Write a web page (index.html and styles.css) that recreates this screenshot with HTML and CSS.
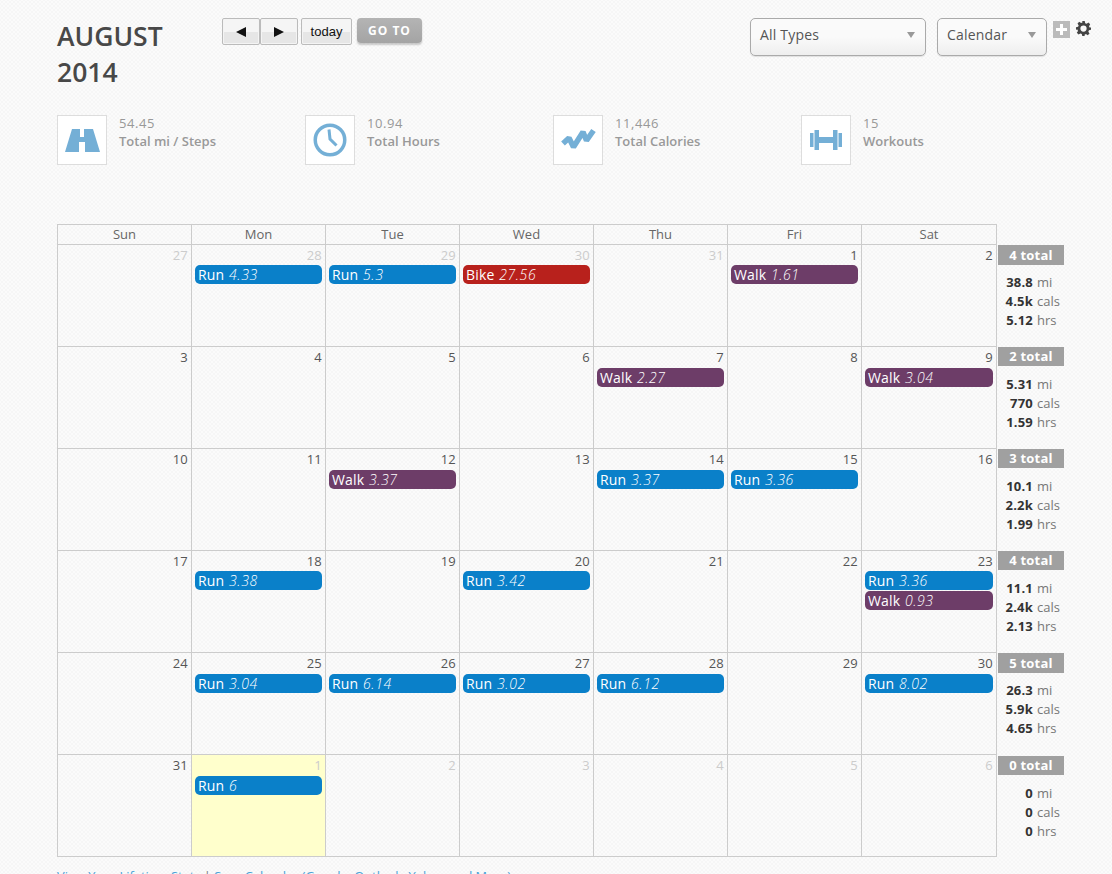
FILE: index.html
```html
<!DOCTYPE html>
<html lang="en">
<head>
<meta charset="utf-8">
<title>August 2014</title>
<link rel="stylesheet" href="styles.css">
</head>
<body>
<div class="page">
  <header class="top">
    <h1 class="title">AUGUST<br>2014</h1>
    <div class="nav">
      <div class="btn-group">
        <button class="btn btn-arrow" aria-label="Previous"><svg width="10" height="10" viewBox="0 0 10 10"><path d="M0 5L10 0v10z" fill="#111"/></svg></button>
        <button class="btn btn-arrow" aria-label="Next"><svg width="10" height="10" viewBox="0 0 10 10"><path d="M10 5L0 0v10z" fill="#111"/></svg></button>
      </div>
      <button class="btn btn-today">today</button>
      <button class="goto">GO TO</button>
    </div>
    <div class="controls">
      <div class="select select-types"><span>All Types</span><i class="caret"></i></div>
      <div class="select select-view"><span>Calendar</span><i class="caret"></i></div>
      <div class="plus"><svg width="17" height="17" viewBox="0 0 17 17"><path d="M7 3h3v4h4v3h-4v4H7v-4H3V7h4z" fill="#fff"/></svg></div>
      <svg class="gear" width="15" height="15" viewBox="0 0 24 24"><path fill="#444" fill-rule="evenodd" d="M10 0h4l.7 3.400 2.300 1 2.900-1.900 2.800 2.800L20.800 8.200l.9 2.200L24 10.200v3.900l-3.300.7-1 2.300 1.900 2.900-2.800 2.800-2.900-1.900-2.200.9L13.900 24H10l-.7-3.300-2.300-.9-2.900 1.900-2.800-2.800 1.900-2.900-.9-2.300L0 14v-4l3.300-.7 1-2.300-1.900-2.900 2.800-2.800L8.100 3.200l2.200-.9zM12 7a5 5 0 1 0 0 10 5 5 0 0 0 0-10z"/></svg>
    </div>
  </header>

  <section class="stats">
    <div class="stat">
      <div class="stat-icon"><svg width="35" height="23" viewBox="0 0 35 23"><path fill="#74afd6" d="M7 0h8v8h4V0h9l7 23H20V13h-6v10H0z"/></svg></div>
      <div class="stat-text"><div class="stat-num">54.45</div><div class="stat-label">Total mi / Steps</div></div>
    </div>
    <div class="stat">
      <div class="stat-icon"><svg width="34" height="34" viewBox="0 0 34 34"><circle cx="17" cy="17" r="14.750" fill="none" stroke="#74afd6" stroke-width="3.500"/><path d="M16 6.500l1 9.500 6.500 6.500" fill="none" stroke="#74afd6" stroke-width="3"/></svg></div>
      <div class="stat-text"><div class="stat-num">10.94</div><div class="stat-label">Total Hours</div></div>
    </div>
    <div class="stat">
      <div class="stat-icon"><svg width="38" height="30" viewBox="0 0 38 30"><path d="M4 18.500l6-5.500 4.500 9 9.500-15 3.500 8.500 7-10" fill="none" stroke="#74afd6" stroke-width="5.500" stroke-linejoin="bevel"/></svg></div>
      <div class="stat-text"><div class="stat-num">11,446</div><div class="stat-label">Total Calories</div></div>
    </div>
    <div class="stat">
      <div class="stat-icon"><svg width="34" height="20" viewBox="0 0 34 20"><path fill="#74afd6" d="M1 3h3.500v14H1zM5.500 0H10v20H5.500zM10 7h14v6H10zM24 0h4.500v20H24zM29.500 3H33v14h-3.500z"/></svg></div>
      <div class="stat-text"><div class="stat-num">15</div><div class="stat-label">Workouts</div></div>
    </div>
  </section>

  <section class="cal">
    <div class="cal-head">
      <div class="dow">Sun</div><div class="dow">Mon</div><div class="dow">Tue</div><div class="dow">Wed</div><div class="dow">Thu</div><div class="dow">Fri</div><div class="dow">Sat</div>
    </div>

    <div class="week week-tight badge-low">
      <div class="day other"><div class="num">27</div></div>
      <div class="day other"><div class="num">28</div><div class="ev run">Run <em>4.33</em></div></div>
      <div class="day other"><div class="num">29</div><div class="ev run">Run <em>5.3</em></div></div>
      <div class="day other"><div class="num">30</div><div class="ev bike">Bike <em>27.56</em></div></div>
      <div class="day other"><div class="num">31</div></div>
      <div class="day"><div class="num">1</div><div class="ev walk">Walk <em>1.61</em></div></div>
      <div class="day"><div class="num">2</div></div>
      <aside class="sum"><div class="sum-badge">4 total</div><div class="sum-rows">
        <b>38.8</b><span>mi</span><b>4.5k</b><span>cals</span><b>5.12</b><span>hrs</span></div></aside>
    </div>

    <div class="week">
      <div class="day"><div class="num">3</div></div>
      <div class="day"><div class="num">4</div></div>
      <div class="day"><div class="num">5</div></div>
      <div class="day"><div class="num">6</div></div>
      <div class="day"><div class="num">7</div><div class="ev walk">Walk <em>2.27</em></div></div>
      <div class="day"><div class="num">8</div></div>
      <div class="day"><div class="num">9</div><div class="ev walk">Walk <em>3.04</em></div></div>
      <aside class="sum"><div class="sum-badge">2 total</div><div class="sum-rows">
        <b>5.31</b><span>mi</span><b>770</b><span>cals</span><b>1.59</b><span>hrs</span></div></aside>
    </div>

    <div class="week">
      <div class="day"><div class="num">10</div></div>
      <div class="day"><div class="num">11</div></div>
      <div class="day"><div class="num">12</div><div class="ev walk">Walk <em>3.37</em></div></div>
      <div class="day"><div class="num">13</div></div>
      <div class="day"><div class="num">14</div><div class="ev run">Run <em>3.37</em></div></div>
      <div class="day"><div class="num">15</div><div class="ev run">Run <em>3.36</em></div></div>
      <div class="day"><div class="num">16</div></div>
      <aside class="sum"><div class="sum-badge">3 total</div><div class="sum-rows">
        <b>10.1</b><span>mi</span><b>2.2k</b><span>cals</span><b>1.99</b><span>hrs</span></div></aside>
    </div>

    <div class="week week-tight">
      <div class="day"><div class="num">17</div></div>
      <div class="day"><div class="num">18</div><div class="ev run">Run <em>3.38</em></div></div>
      <div class="day"><div class="num">19</div></div>
      <div class="day"><div class="num">20</div><div class="ev run">Run <em>3.42</em></div></div>
      <div class="day"><div class="num">21</div></div>
      <div class="day"><div class="num">22</div></div>
      <div class="day"><div class="num">23</div><div class="ev run">Run <em>3.36</em></div><div class="ev walk">Walk <em>0.93</em></div></div>
      <aside class="sum"><div class="sum-badge">4 total</div><div class="sum-rows">
        <b>11.1</b><span>mi</span><b>2.4k</b><span>cals</span><b>2.13</b><span>hrs</span></div></aside>
    </div>

    <div class="week badge-low">
      <div class="day"><div class="num">24</div></div>
      <div class="day"><div class="num">25</div><div class="ev run">Run <em>3.04</em></div></div>
      <div class="day"><div class="num">26</div><div class="ev run">Run <em>6.14</em></div></div>
      <div class="day"><div class="num">27</div><div class="ev run">Run <em>3.02</em></div></div>
      <div class="day"><div class="num">28</div><div class="ev run">Run <em>6.12</em></div></div>
      <div class="day"><div class="num">29</div></div>
      <div class="day"><div class="num">30</div><div class="ev run">Run <em>8.02</em></div></div>
      <aside class="sum"><div class="sum-badge">5 total</div><div class="sum-rows">
        <b>26.3</b><span>mi</span><b>5.9k</b><span>cals</span><b>4.65</b><span>hrs</span></div></aside>
    </div>

    <div class="week week-last">
      <div class="day"><div class="num">31</div></div>
      <div class="day other today"><div class="num">1</div><div class="ev run">Run <em>6</em></div></div>
      <div class="day other"><div class="num">2</div></div>
      <div class="day other"><div class="num">3</div></div>
      <div class="day other"><div class="num">4</div></div>
      <div class="day other"><div class="num">5</div></div>
      <div class="day other"><div class="num">6</div></div>
      <aside class="sum"><div class="sum-badge">0 total</div><div class="sum-rows">
        <b>0</b><span>mi</span><b>0</b><span>cals</span><b>0</b><span>hrs</span></div></aside>
    </div>
  </section>

  <p class="links"><a href="#">View Your Lifetime Stats</a> | <a href="#">Sync Calendar (Google, Outlook, Yahoo and More)</a></p>
</div>
</body>
</html>
```

FILE: styles.css
```css
* { box-sizing: border-box; }
html, body { margin: 0; height: 874px; overflow: hidden; }
body {
  background-color: #fbfbfb;
  background-image: radial-gradient(#f6f6f6 1px, transparent 1px), radial-gradient(#f6f6f6 1px, transparent 1px);
  background-size: 4px 4px;
  background-position: 0 0, 2px 2px;
  font-family: "Open Sans", "Liberation Sans", sans-serif;
  color: #444;
}
.page { padding: 18px 0 0 57px; }

.top { display: flex; align-items: flex-start; height: 97px; }
.title { margin: 0; width: 165px; font-size: 26.5px; line-height: 36px; font-weight: 600; color: #484848; }
.nav { display: flex; align-items: flex-start; }
.btn-group { display: flex; margin-right: 3px; }
.btn {
  height: 27px; padding: 0;
  border: 1px solid #bbb; border-radius: 2px;
  background: linear-gradient(#f5f5f5 0 50%, #e6e6e6 50%);
  box-shadow: inset 0 0 0 1px #f4f4f4;
  color: #111; font-family: "Liberation Sans", sans-serif; font-size: 13px;
}
.btn-arrow { display: flex; align-items: center; justify-content: center; width: 38px; }
.btn-today { width: 51px; margin-right: 5px; }
.goto {
  width: 65px; height: 25px; padding: 0; border: 0; border-radius: 4px;
  background: linear-gradient(#b4b4b4, #a4a4a4);
  box-shadow: 0 2px 2px rgba(0,0,0,.2);
  color: #fff; font-family: inherit; font-size: 12px; font-weight: 700; letter-spacing: 1px;
}
.controls { display: flex; align-items: flex-start; margin-left: 328px; }
.select {
  display: flex; align-items: center; justify-content: space-between;
  height: 38px; padding: 0 10px 5px 9px;
  border: 1px solid #aaa; border-radius: 5px;
  background: linear-gradient(#fafafa 0 50%, #eee);
  box-shadow: 0 1px 1px rgba(0,0,0,.1);
  font-size: 14px; color: #555; letter-spacing: .2px;
}
.select-types { width: 176px; margin-right: 11px; }
.select-view { width: 110px; margin-right: 6px; }
.caret { width: 0; height: 0; border: 4px solid transparent; border-top: 6px solid #999; border-bottom: 0; }
.plus { width: 17px; height: 17px; margin: 3px 6px 0 0; background: #bbb; display: flex; }
.gear { margin-top: 3px; }

.stats { display: flex; height: 109px; }
.stat { display: flex; width: 248px; align-items: flex-start; }
.stat-icon {
  display: flex; align-items: center; justify-content: center;
  width: 50px; height: 50px; background: #fff; border: 1px solid #ddd;
}
.stat-text { margin: -1px 0 0 12px; font-size: 13px; line-height: 18px; color: #999; }
.stat-num { letter-spacing: .6px; }
.stat-label { font-weight: 600; }

.cal { font-size: 13px; }
.cal-head { display: grid; grid-template-columns: repeat(6, 134px) 135px; width: 940px; height: 20px; border-top: 1px solid #ccc; border-right: 1px solid #ccc; }
.dow { text-align: center; color: #666; line-height: 19px; border-left: 1px solid #ccc; font-size: 13px; }
.week { display: grid; grid-template-columns: repeat(6, 134px) 135px 1fr; height: 102px; }
.day { border-top: 1px solid #ccc; border-left: 1px solid #ccc; padding: 0 3px; }
.week-last .day { height: 103px; border-bottom: 1px solid #ccc; }
.num { text-align: right; height: 21px; line-height: 20px; color: #555; letter-spacing: .2px; }
.week-tight .num { height: 20px; }
.other .num { color: #ccc; }
.today { background: #ffffcc; }
.ev {
  height: 19px; margin-bottom: 1px; padding-left: 3px;
  border-radius: 5px; color: #fff; font-size: 14px; line-height: 19px;
  white-space: nowrap; letter-spacing: .15px;
}
.ev em { margin-left: 1px; font-weight: 300; letter-spacing: .6px; }
.run { background: #0a80c9; }
.walk { background: #6d3d68; }
.bike { background: #b8211c; }
.sum { border-left: 1px solid #ccc; padding: 1px 0 0 1px; }
.sum-badge {
  width: 66px; height: 19px; background: #a0a0a0; color: #fff;
  text-align: center; font-size: 13px; font-weight: 700; line-height: 19px; letter-spacing: .2px;
}
.badge-low .sum-badge { height: 20px; line-height: 21px; }
.sum-rows {
  display: grid; grid-template-columns: 28px auto; column-gap: 4px; justify-content: start;
  margin: 9px 0 0 7px; font-size: 13px; line-height: 19px; color: #777;
}
.badge-low .sum-rows { margin-top: 8px; }
.week-last .sum-badge { margin-top: 1px; }
.sum-rows b { text-align: right; color: #333; letter-spacing: .2px; }

.links { margin: 12px 0 0; font-size: 12.8px; line-height: 17px; color: #777; }
.links a { color: #4aa3d8; text-decoration: none; }
```
